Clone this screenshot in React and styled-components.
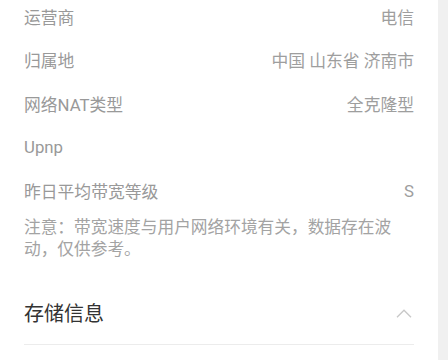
import React from "react";
import styled, { createGlobalStyle } from "styled-components";

const GlobalStyle = createGlobalStyle`
  html, body {
    margin: 0;
    padding: 0;
    background: #f0f0f0;
    font-family: Roboto, "Noto Sans CJK SC", sans-serif;
    overflow: hidden;
  }
`;

const Page = styled.div`
  width: 438px;
  height: 360px;
  background: #fff;
  overflow: hidden;
`;

const List = styled.div`
  margin-top: -5px;
  padding: 0 24px;
  display: flex;
  flex-direction: column;
`;

const Row = styled.div`
  height: 43.5px;
  display: flex;
  align-items: center;
  justify-content: space-between;
  font-size: 16.8px;
  color: #999;
`;

const Label = styled.span``;

const Value = styled.span`
  color: #9e9e9e;
`;

const Note = styled.p`
  margin: 4px 0 0;
  font-size: 16.7px;
  line-height: 22px;
  color: #a3a3a3;
`;

const Section = styled.div`
  margin-top: 20px;
  height: 63px;
  display: flex;
  align-items: center;
  justify-content: space-between;
  border-bottom: 1px solid #ececec;
`;

const SectionTitle = styled.h3`
  margin: 0;
  font-size: 20px;
  font-weight: 400;
  color: #333;
`;

const Chevron = styled.svg`
  width: 16px;
  height: 9px;
  margin-right: 2px;
  margin-top: 2px;
`;

const rows = [
  ["运营商", "电信"],
  ["归属地", "中国 山东省 济南市"],
  ["网络NAT类型", "全克隆型"],
  ["Upnp", ""],
  ["昨日平均带宽等级", "S"],
];

export default function App() {
  return (
    <Page>
      <GlobalStyle />
      <List>
        {rows.map(([label, value]) => (
          <Row key={label}>
            <Label>{label}</Label>
            <Value>{value}</Value>
          </Row>
        ))}
        <Note>注意：带宽速度与用户网络环境有关，数据存在波动，仅供参考。</Note>
        <Section>
          <SectionTitle>存储信息</SectionTitle>
          <Chevron viewBox="0 0 16 9">
            <path d="M1 8.2 L8 1.2 L15 8.2" fill="none" stroke="#c8c8c8" strokeWidth="1.3" />
          </Chevron>
        </Section>
      </List>
    </Page>
  );
}
